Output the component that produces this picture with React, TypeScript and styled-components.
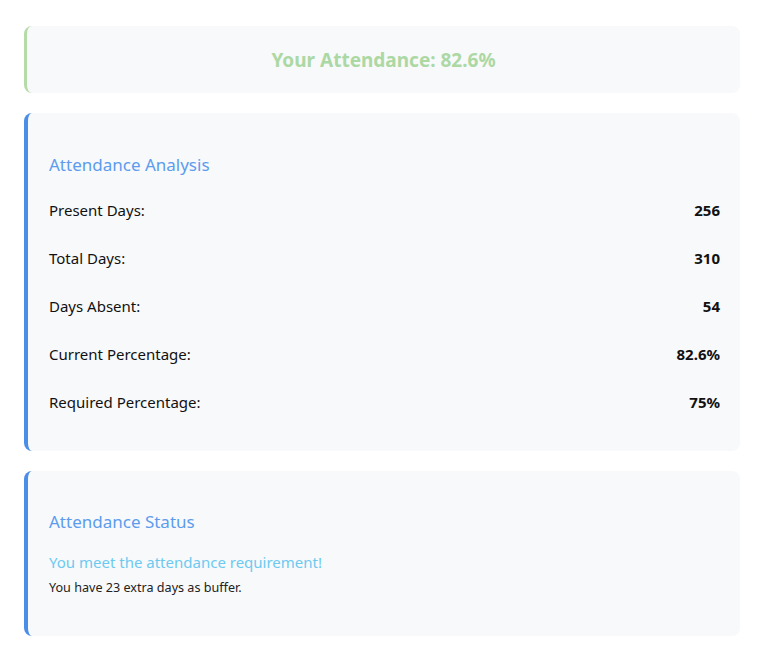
import React from "react";
import styled, { createGlobalStyle } from "styled-components";

const Global = createGlobalStyle`
  html, body { margin: 0; padding: 0; background: #ffffff; }
  body { font-family: "Noto Sans", "Open Sans", sans-serif; color: #111; }
`;

const Page = styled.div`
  padding: 26px 22px 20px 24px;
  display: flex;
  flex-direction: column;
  gap: 20px;
`;

const Card = styled.section<{ $accent: string }>`
  background: #f8f9fb;
  border-left: 4px solid ${(p) => p.$accent};
  border-radius: 8px;
`;

const Banner = styled(Card)`
  padding: 20px;
  display: flex;
  justify-content: center;
  align-items: center;
  height: 67px;
  box-sizing: border-box;
  border-left-width: 3px;
`;

const BannerText = styled.h2`
  margin: 0;
  padding-top: 2px;
  font-size: 19px;
  line-height: 27px;
  font-weight: 700;
  color: #acd8a3;
`;

const Panel = styled(Card)`
  padding: 40px 20px 25px 21px;
  display: flex;
  flex-direction: column;
`;

const StatusPanel = styled(Card)`
  padding: 39px 20px 39px 21px;
  display: flex;
  flex-direction: column;
`;

const Title = styled.h3<{ $gap: number }>`
  margin: 0 0 ${(p) => p.$gap}px;
  font-size: 17px;
  line-height: 24px;
  font-weight: 400;
  color: #5c9cee;
`;

const Row = styled.div`
  display: flex;
  justify-content: space-between;
  align-items: center;
  height: 48px;
  font-size: 15px;
`;

const Label = styled.span`
  color: #111;
`;

const Value = styled.span`
  font-weight: 700;
  color: #111;
`;

const Message = styled.p`
  margin: 0 0 6px;
  font-size: 15px;
  line-height: 22px;
  color: #6ccaf0;
`;

const Note = styled.p`
  margin: 0;
  font-size: 12.6px;
  line-height: 18px;
  color: #222;
`;

const rows: [string, string][] = [
  ["Present Days:", "256"],
  ["Total Days:", "310"],
  ["Days Absent:", "54"],
  ["Current Percentage:", "82.6%"],
  ["Required Percentage:", "75%"],
];

export default function App() {
  return (
    <>
      <Global />
      <Page>
        <Banner $accent="#b6dba9">
          <BannerText>Your Attendance: 82.6%</BannerText>
        </Banner>
        <Panel $accent="#4a8ee8">
          <Title $gap={9}>Attendance Analysis</Title>
          {rows.map(([l, v]) => (
            <Row key={l}>
              <Label>{l}</Label>
              <Value>{v}</Value>
            </Row>
          ))}
        </Panel>
        <StatusPanel $accent="#4a8ee8">
          <Title $gap={17}>Attendance Status</Title>
          <Message>You meet the attendance requirement!</Message>
          <Note>You have 23 extra days as buffer.</Note>
        </StatusPanel>
      </Page>
    </>
  );
}
